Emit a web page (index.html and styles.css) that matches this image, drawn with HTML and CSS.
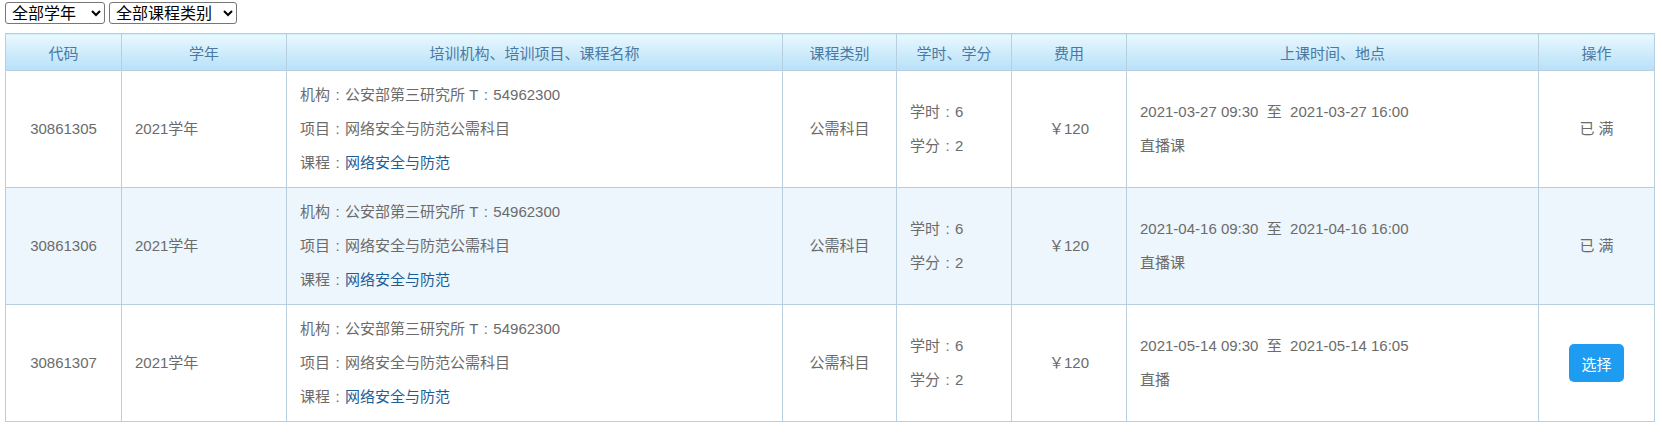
FILE: index.html
```html
<!DOCTYPE html>
<html lang="zh-CN">
<head>
<meta charset="utf-8">
<title>课程选择</title>
<link rel="stylesheet" href="styles.css">
</head>
<body>
<div class="page">
  <div class="filters">
    <select class="sel sel-year"><option>全部学年</option></select>
    <select class="sel sel-type"><option>全部课程类别</option></select>
  </div>
  <table class="grid">
    <colgroup>
      <col class="c1"><col class="c2"><col class="c3"><col class="c4"><col class="c5"><col class="c6"><col class="c7"><col class="c8">
    </colgroup>
    <thead>
      <tr>
        <th>代码</th><th>学年</th><th>培训机构、培训项目、课程名称</th><th>课程类别</th><th>学时、学分</th><th>费用</th><th>上课时间、地点</th><th>操作</th>
      </tr>
    </thead>
    <tbody>
      <tr>
        <td class="center">30861305</td>
        <td>2021学年</td>
        <td><div class="ln">机构<span class="colon">:</span>公安部第三研究所 T<span class="colon">:</span>54962300</div><div class="ln">项目<span class="colon">:</span>网络安全与防范公需科目</div><div class="ln">课程<span class="colon">:</span><a class="link">网络安全与防范</a></div></td>
        <td class="center">公需科目</td>
        <td><div class="ln">学时<span class="colon">:</span>6</div><div class="ln">学分<span class="colon">:</span>2</div></td>
        <td class="center">￥120</td>
        <td><div class="ln">2021-03-27 09:30&nbsp;&nbsp;至&nbsp;&nbsp;2021-03-27 16:00</div><div class="ln">直播课</div></td>
        <td class="center">已 满</td>
      </tr>
      <tr class="alt">
        <td class="center">30861306</td>
        <td>2021学年</td>
        <td><div class="ln">机构<span class="colon">:</span>公安部第三研究所 T<span class="colon">:</span>54962300</div><div class="ln">项目<span class="colon">:</span>网络安全与防范公需科目</div><div class="ln">课程<span class="colon">:</span><a class="link">网络安全与防范</a></div></td>
        <td class="center">公需科目</td>
        <td><div class="ln">学时<span class="colon">:</span>6</div><div class="ln">学分<span class="colon">:</span>2</div></td>
        <td class="center">￥120</td>
        <td><div class="ln">2021-04-16 09:30&nbsp;&nbsp;至&nbsp;&nbsp;2021-04-16 16:00</div><div class="ln">直播课</div></td>
        <td class="center">已 满</td>
      </tr>
      <tr>
        <td class="center">30861307</td>
        <td>2021学年</td>
        <td><div class="ln">机构<span class="colon">:</span>公安部第三研究所 T<span class="colon">:</span>54962300</div><div class="ln">项目<span class="colon">:</span>网络安全与防范公需科目</div><div class="ln">课程<span class="colon">:</span><a class="link">网络安全与防范</a></div></td>
        <td class="center">公需科目</td>
        <td><div class="ln">学时<span class="colon">:</span>6</div><div class="ln">学分<span class="colon">:</span>2</div></td>
        <td class="center">￥120</td>
        <td><div class="ln">2021-05-14 09:30&nbsp;&nbsp;至&nbsp;&nbsp;2021-05-14 16:05</div><div class="ln">直播</div></td>
        <td class="center"><button class="btn">选择</button></td>
      </tr>
    </tbody>
  </table>
</div>
</body>
</html>
```
FILE: styles.css
```css
html, body {
  margin: 0;
  padding: 0;
  background: #fff;
}
.page {
  padding: 2px 5px 0 5px;
  font-family: "Liberation Sans", "Noto Sans CJK SC", sans-serif;
  font-size: 15px;
  color: #6b6b6b;
}
.filters {
  display: flex;
  gap: 4px;
  height: 22px;
  margin-bottom: 9px;
}
.sel {
  height: 22px;
  font-family: "Liberation Sans", "Noto Sans CJK SC", sans-serif;
  font-size: 16px;
  color: #000;
  padding: 0 0 0 2px;
  border: 1px solid #767676;
  border-radius: 3px;
  background: #fff;
}
.sel-year { width: 100px; }
.sel-type { width: 128px; }
.grid {
  border-collapse: collapse;
  table-layout: fixed;
  width: 1649px;
}
.c1 { width: 116px; }
.c2 { width: 165px; }
.c3 { width: 496px; }
.c4 { width: 114px; }
.c5 { width: 115px; }
.c6 { width: 115px; }
.c7 { width: 412px; }
.c8 { width: 116px; }
.grid th, .grid td {
  border: 1px solid #b7cfde;
}
.grid th {
  height: 36px;
  padding: 0;
  font-weight: normal;
  color: #4b79a3;
  background: linear-gradient(to bottom, #eaf8fe 0%, #cdebfb 55%, #b8e0f8 100%);
  text-align: center;
  vertical-align: middle;
}
.grid td {
  height: 102px;
  padding: 7px 13px;
  vertical-align: middle;
  text-align: left;
  line-height: 34px;
}
.grid td.center {
  text-align: center;
}
.grid tr.alt td {
  background: #edf6fc;
}
.ln {
  white-space: nowrap;
}
.colon {
  display: inline-block;
  width: 15px;
  text-align: center;
}
.link {
  color: #1d5e9a;
  text-decoration: none;
}
.btn {
  width: 55px;
  height: 38px;
  border: 0;
  border-radius: 5px;
  background: #1e9cf1;
  color: #fff;
  font-family: "Liberation Sans", "Noto Sans CJK SC", sans-serif;
  font-size: 15px;
  padding: 0;
  vertical-align: middle;
}
```
